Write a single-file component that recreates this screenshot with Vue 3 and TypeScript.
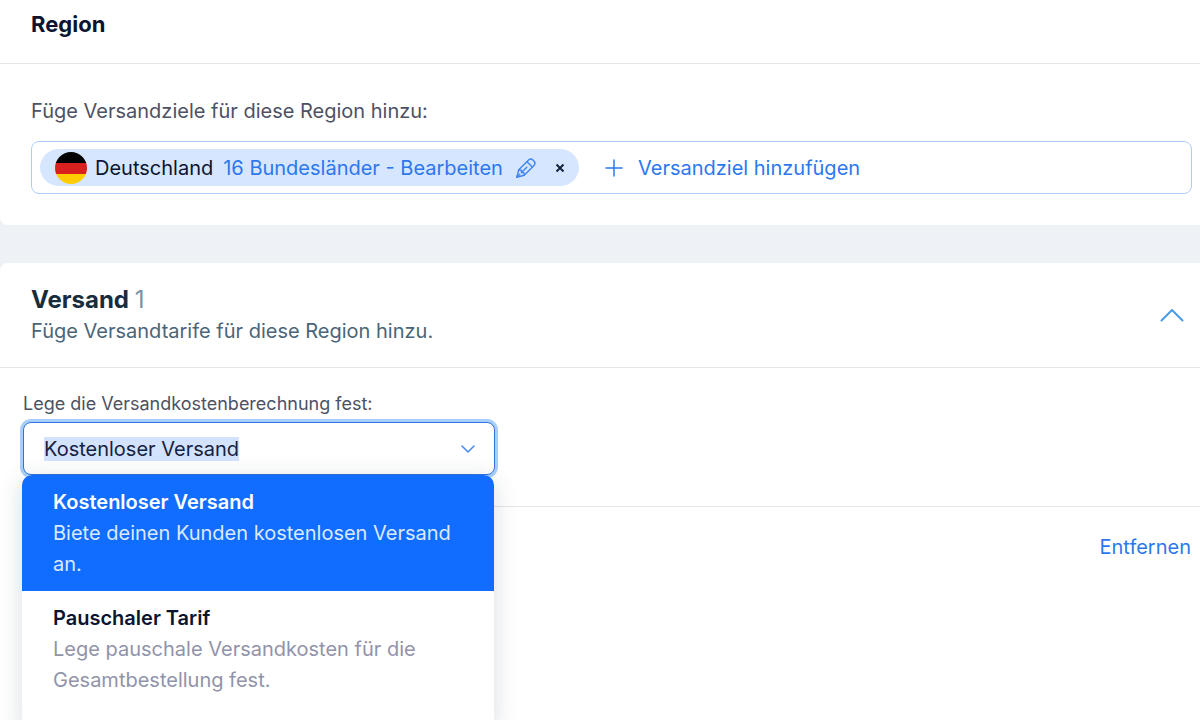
<script setup lang="ts">
import { onMounted, ref } from 'vue'

interface RateOption {
  id: string
  title: string
  description: string
}

const options: RateOption[] = [
  {
    id: 'free',
    title: 'Kostenloser Versand',
    description: 'Biete deinen Kunden kostenlosen Versand an.',
  },
  {
    id: 'flat',
    title: 'Pauschaler Tarif',
    description: 'Lege pauschale Versandkosten für die Gesamtbestellung fest.',
  },
]

const selectedId = ref('free')
const rateText = ref(options[0].title)
const rateCount = ref(1)
const rateInput = ref<HTMLInputElement | null>(null)

function choose(option: RateOption) {
  selectedId.value = option.id
  rateText.value = option.title
}

onMounted(() => {
  rateInput.value?.focus()
  rateInput.value?.select()
})
</script>

<template>
  <main class="page">
    <section class="card card-region">
      <header class="card-header">
        <h1 class="title">Region</h1>
      </header>
      <div class="region-body">
        <p class="text">Füge Versandziele für diese Region hinzu:</p>
        <div class="destinations">
          <div class="chip">
            <svg class="flag" viewBox="0 0 32 32" aria-hidden="true">
              <clipPath id="flag-clip"><circle cx="16" cy="16" r="16" /></clipPath>
              <g clip-path="url(#flag-clip)">
                <rect width="32" height="11" fill="#000" />
                <rect y="11" width="32" height="11" fill="#d8201f" />
                <rect y="22" width="32" height="10" fill="#fc0" />
              </g>
            </svg>
            <span class="country">Deutschland</span>
            <button type="button" class="link-button edit">
              <span>16 Bundesländer - Bearbeiten</span>
              <svg class="pencil" viewBox="0 0 22 22" aria-hidden="true">
                <path d="M1.8 20.2 3.8 12.8 13.6 3Q15.7 1 17.9 3.1L18.9 4.1Q21 6.300 19 8.400L9.200 18.200Z" />
                <path d="M12 4.700 17.300 10M3.800 12.800 6.300 13.100 6.500 15.500 8.900 15.700 9.200 18.200M6.500 15.500 11.800 10.200M1.800 20.200 4.800 17.200" />
              </svg>
            </button>
            <button type="button" class="remove" aria-label="Deutschland entfernen">
              <svg viewBox="0 0 10 10" aria-hidden="true"><path d="M1.500 1.500 8.500 8.500M8.500 1.500 1.500 8.500" /></svg>
            </button>
          </div>
          <button type="button" class="link-button add">
            <svg class="plus" viewBox="0 0 18 18" aria-hidden="true"><path d="M9 1V17M1 9H17" /></svg>
            <span>Versandziel hinzufügen</span>
          </button>
        </div>
      </div>
    </section>

    <section class="card card-shipping">
      <header class="card-header shipping-header">
        <div>
          <h2 class="heading">Versand <span class="count">{{ rateCount }}</span></h2>
          <p class="subtitle">Füge Versandtarife für diese Region hinzu.</p>
        </div>
        <button type="button" class="collapse" aria-label="Einklappen">
          <svg viewBox="0 0 24 14" aria-hidden="true"><path d="M1.500 12.500 12 2 22.500 12.500" /></svg>
        </button>
      </header>

      <div class="rate">
        <label class="rate-label" for="rate-type">Lege die Versandkostenberechnung fest:</label>
        <div class="combo">
          <div class="combo-box">
            <input
              id="rate-type"
              ref="rateInput"
              v-model="rateText"
              class="combo-input"
              type="text"
              role="combobox"
              aria-expanded="true"
              aria-controls="rate-options"
              autocomplete="off"
              spellcheck="false"
            />
            <svg class="chevron" viewBox="0 0 14 8" aria-hidden="true"><path d="M1 1 7 7 13 1" /></svg>
          </div>
          <ul id="rate-options" class="menu" role="listbox">
            <li
              v-for="option in options"
              :key="option.id"
              class="option"
              :class="{ active: option.id === selectedId }"
              role="option"
              :aria-selected="option.id === selectedId"
              @click="choose(option)"
            >
              <strong class="option-title">{{ option.title }}</strong>
              <span class="option-text">{{ option.description }}</span>
            </li>
          </ul>
        </div>
      </div>

      <footer class="rate-footer">
        <button type="button" class="link-button">Entfernen</button>
      </footer>
    </section>
  </main>
</template>

<style>
body {
  margin: 0;
  background: #eef2f6;
}
</style>

<style scoped>
.page {
  box-sizing: border-box;
  display: flex;
  flex-direction: column;
  gap: 38px;
  height: 100vh;
  overflow: hidden;
  font-family: Inter, "Noto Sans", sans-serif;
  font-size: 20px;
  line-height: 24px;
  color: #0b1430;
}

.card {
  background: #fff;
}

.card-region {
  border-bottom-left-radius: 8px;
}

.card-shipping {
  flex: 1;
  border-top-left-radius: 8px;
}

.card-header {
  border-bottom: 1px solid #e3e5e9;
  padding: 10px 16px 25px 31px;
}

.title,
.heading,
.text,
.subtitle {
  margin: 0;
}

.title {
  font-size: 22px;
  line-height: 28px;
  font-weight: 700;
}

.region-body {
  padding: 35px 8px 31px 31px;
}

.text {
  color: #4d5163;
}

.destinations {
  display: flex;
  align-items: center;
  gap: 26px;
  margin-top: 18px;
  padding: 7px 8px;
  border: 1px solid #b0ccfb;
  border-radius: 8px;
}

.chip {
  display: flex;
  align-items: center;
  box-sizing: border-box;
  height: 37px;
  padding: 0 14px 0 15px;
  border-radius: 19px;
  background: #d6e6fe;
}

.flag {
  width: 32px;
  height: 32px;
  margin-right: 8px;
}

button {
  margin: 0;
  padding: 0;
  border: 0;
  background: none;
  font: inherit;
  cursor: pointer;
}

svg {
  display: block;
  flex: none;
  fill: none;
  stroke-linecap: round;
  stroke-linejoin: round;
}

.link-button {
  display: flex;
  align-items: center;
  color: #2b78ee;
}

.edit {
  gap: 12px;
  margin-left: 10px;
}

.pencil {
  width: 22px;
  height: 22px;
  stroke: #4085f0;
  stroke-width: 1.4;
}

.remove {
  margin-left: 18px;
}

.remove svg {
  width: 10px;
  height: 10px;
  stroke: #16233c;
  stroke-width: 2;
  stroke-linecap: butt;
}

.add {
  gap: 15px;
}

.plus {
  width: 18px;
  height: 18px;
  stroke: #2b78ee;
  stroke-width: 1.5;
}

.shipping-header {
  display: flex;
  align-items: center;
  justify-content: space-between;
  padding-top: 22px;
  padding-bottom: 22px;
}

.heading {
  font-size: 24px;
  line-height: 30px;
  font-weight: 700;
  color: #162d3d;
}

.count {
  font-weight: 400;
  color: #7a92a5;
}

.subtitle {
  padding-top: 3px;
  line-height: 27px;
  color: #4a6578;
}

.collapse svg {
  width: 24px;
  height: 14px;
  stroke: #4a9ae6;
  stroke-width: 2;
}

.rate {
  margin-left: 23px;
  padding: 24px 0 31px;
  border-bottom: 1px solid #e3e5e9;
}

.rate-label {
  display: block;
  font-size: 18px;
  color: #4d5163;
}

.combo {
  position: relative;
  max-width: 472px;
  margin-top: 6px;
}

.combo-box {
  display: flex;
  align-items: center;
  box-sizing: border-box;
  height: 53px;
  padding: 0 19px 0 20px;
  border: 1px solid #2f74df;
  border-radius: 8px;
  box-shadow: 0 0 0 3px #a8cffb;
  background: #fff;
}

.combo-input {
  flex: 1;
  min-width: 0;
  height: 26px;
  padding: 0;
  border: 0;
  outline: 0;
  background: transparent;
  font: inherit;
  color: #16213f;
}

.combo-input::selection {
  background: #d3e3fd;
  color: #16213f;
}

.chevron {
  width: 14px;
  height: 8px;
  stroke: #4388ee;
  stroke-width: 1.5;
}

.menu {
  position: absolute;
  top: 100%;
  left: -1px;
  right: 1px;
  z-index: 1;
  margin: 0;
  padding: 0 0 24px;
  overflow: hidden;
  list-style: none;
  border-radius: 10px;
  background: #fff;
  box-shadow: 0 4px 24px rgba(22, 45, 61, 0.16);
}

.option {
  padding: 12px 31px 11px;
  line-height: 31px;
  color: #9193a9;
  cursor: pointer;
}

.option-title,
.option-text {
  display: block;
}

.option-title {
  font-weight: 600;
  color: #0b1430;
}

.active {
  background: #116dff;
}

.active .option-title {
  color: #fff;
}

.active .option-text {
  color: #dbe9ff;
}

.rate-footer {
  display: flex;
  justify-content: flex-end;
  padding: 28px 9px;
}
</style>
